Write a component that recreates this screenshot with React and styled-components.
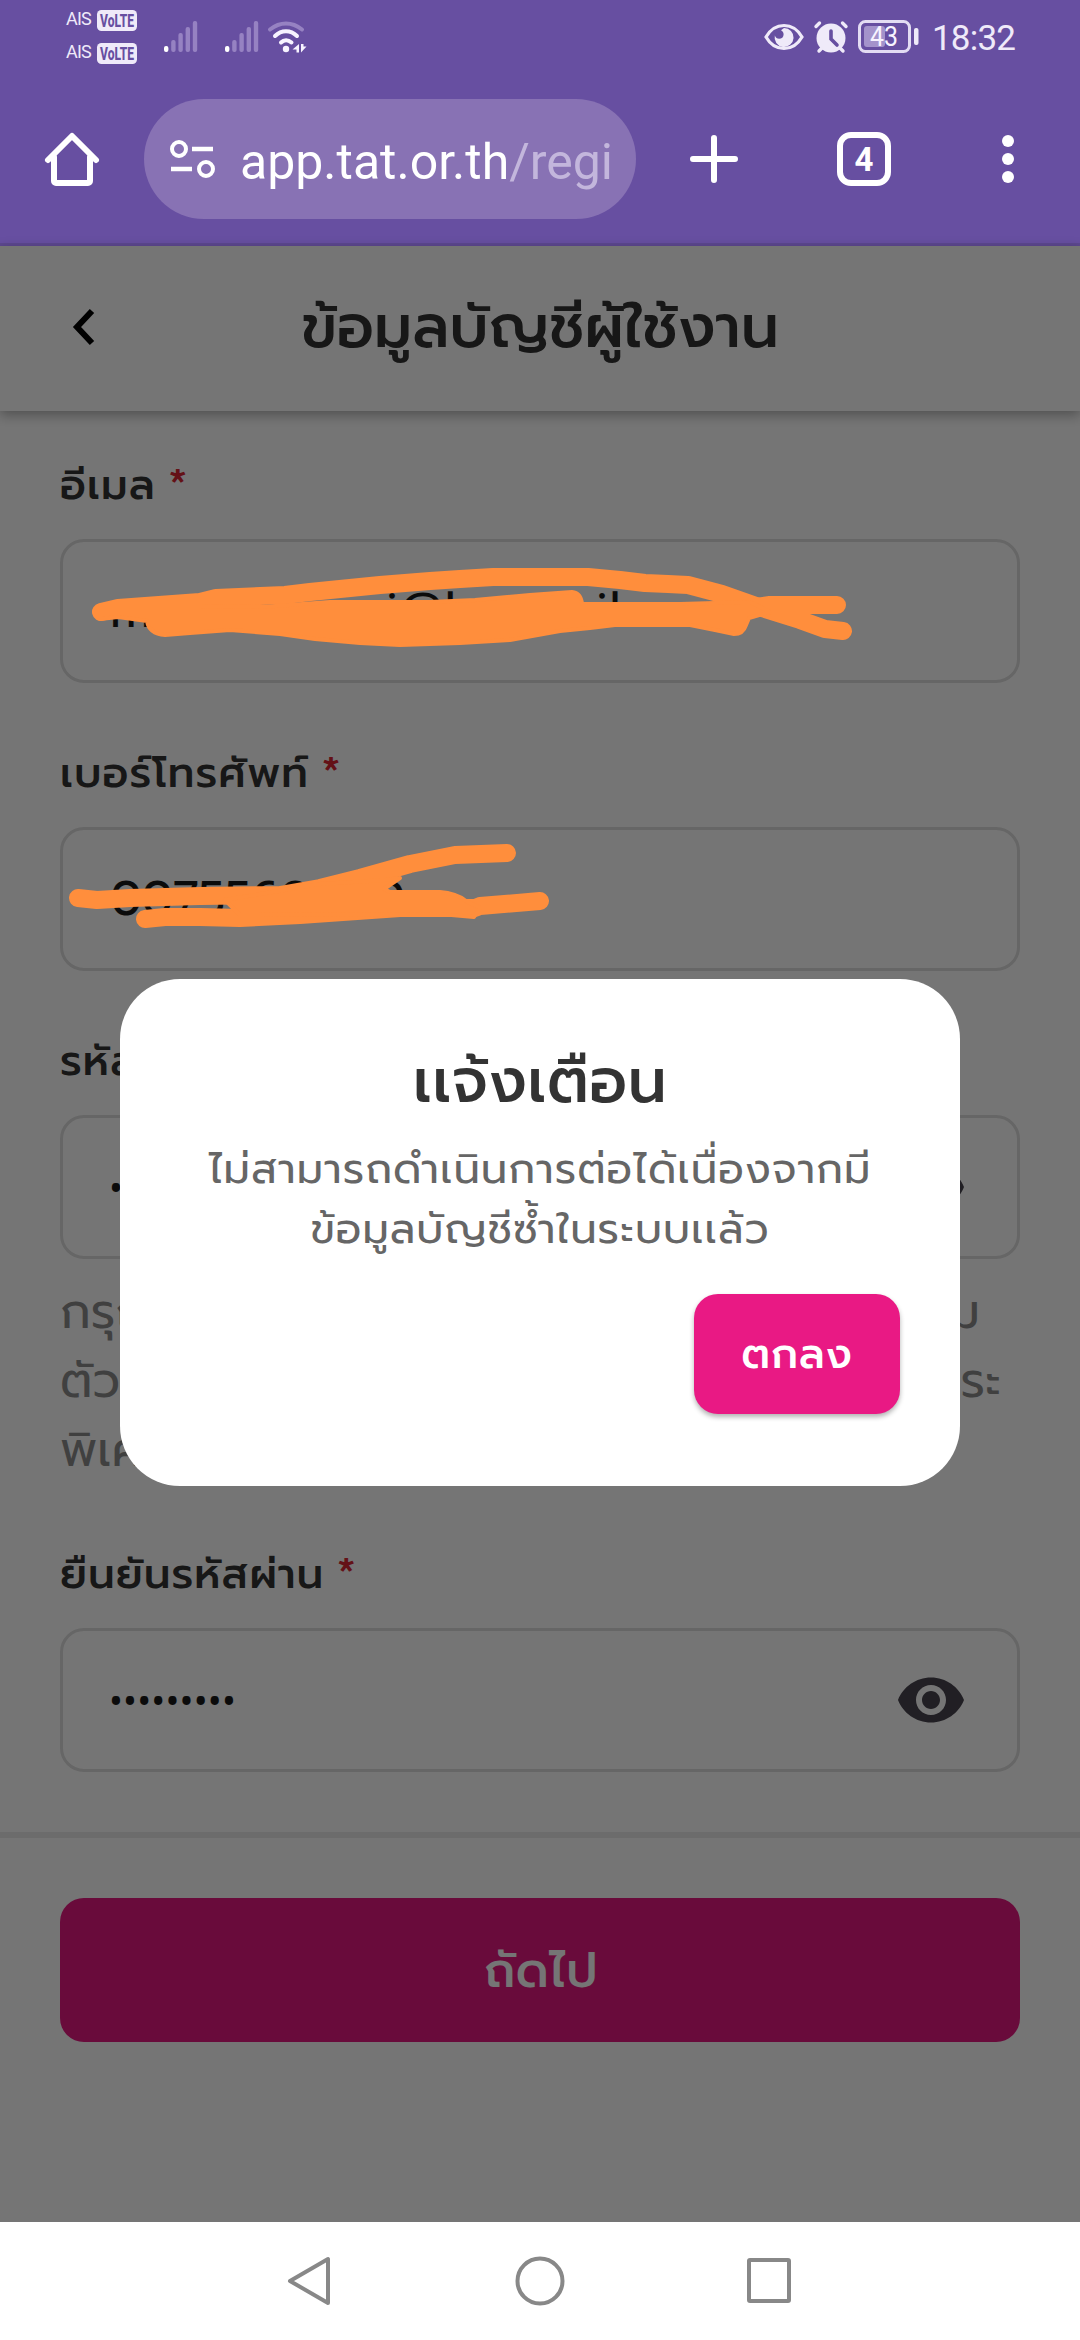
import React from "react";
import styled, { createGlobalStyle } from "styled-components";

const GlobalStyle = createGlobalStyle`
  * {
    box-sizing: border-box;
  }
  body {
    margin: 0;
    font-family: "Prompt", "Noto Sans Thai", "Noto Sans", sans-serif;
  }
  svg {
    display: block;
    flex: none;
    overflow: visible;
  }
`;

const Screen = styled.div`
  width: 1080px;
  height: 2340px;
  display: flex;
  flex-direction: column;
  background: #fff;
  overflow: hidden;
`;

/* ---------- phone status bar + browser bar ---------- */

const BrowserChrome = styled.header`
  flex: none;
  height: 246px;
  background: #674fa1;
  border-bottom: 3px solid #5d4890;
  font-family: Roboto, "Noto Sans", sans-serif;
`;

const StatusBar = styled.div`
  height: 74px;
  padding: 0 66px;
  display: flex;
  align-items: center;
  color: #efeaf9;
`;

const SimList = styled.div`
  display: flex;
  flex-direction: column;
`;

const Sim = styled.div`
  height: 33px;
  display: flex;
  align-items: center;
  gap: 6px;
  font-size: 18px;
  letter-spacing: -0.8px;
`;

const Carrier = styled.span`
  width: 25px;
  line-height: 20px;
  padding-bottom: 3px;
`;

const Signals = styled.div`
  display: flex;
  margin: 0 9px 0 27px;
  gap: 27px;
`;

const StatusRight = styled.div`
  margin-left: auto;
  display: flex;
  align-items: center;
`;

const StatusIcons = styled.div`
  display: flex;
  align-items: center;
  gap: 10px;
`;

const Clock = styled.span`
  margin-left: 12px;
  width: 82px;
  font-size: 35px;
  line-height: 40px;
  padding-top: 4px;
  white-space: nowrap;
  letter-spacing: -0.8px;
`;

const Toolbar = styled.div`
  height: 120px;
  margin-top: 25px;
  padding-left: 45px;
  display: flex;
  align-items: center;
`;

const AddressPill = styled.div`
  width: 492px;
  height: 120px;
  margin: 0 54px 0 45px;
  padding-left: 26px;
  border-radius: 60px;
  background: #8872b4;
  display: flex;
  align-items: center;
  gap: 24px;
`;

const Url = styled.span`
  padding-top: 5px;
  color: #fff;
  font-size: 50px;
  line-height: 60px;
  white-space: nowrap;
`;

const UrlPath = styled.span`
  color: #c3b6dc;
`;

const TabCount = styled.div`
  width: 54px;
  height: 54px;
  margin: 0 111px 0 99px;
  border: 6px solid #fff;
  border-radius: 14px;
  color: #fff;
  font-size: 33px;
  font-weight: 700;
  line-height: 43px;
  text-align: center;
`;

/* ---------- page ---------- */

const Page = styled.main`
  position: relative;
  flex: none;
  height: 1976px;
  background: #fff;
`;

const PageHeader = styled.div`
  height: 165px;
  padding: 0 0 3px 72px;
  display: grid;
  grid-template-columns: 100px 736px;
  align-items: center;
  box-shadow: 0 4px 12px rgba(0, 0, 0, 0.32);
`;

const PageTitle = styled.h1`
  margin: 0;
  color: #333;
  font-size: 60px;
  font-weight: 500;
  line-height: 90px;
  text-align: center;
`;

const Form = styled.form`
  padding: 42px 60px 60px;
  border-bottom: 6px solid #ececec;
`;

const Field = styled.div`
  & + & {
    margin-top: 58px;
  }
`;

const Label = styled.div`
  height: 64px;
  margin-bottom: 22px;
  color: #333;
  font-size: 42px;
  font-weight: 500;
  line-height: 64px;
  letter-spacing: 1.05px;
  word-spacing: -3.5px;
`;

const Required = styled.span`
  color: #d92632;
`;

const InputBox = styled.div`
  height: 144px;
  padding: 0 50px 0 47px;
  border: 3px solid #dedede;
  border-radius: 24px;
  display: flex;
  align-items: center;
  color: #1a1a1a;
  font-size: 48px;
  line-height: 72px;
`;

const Piece = styled.span`
  width: ${(p) => p.$width}px;
  white-space: nowrap;
  letter-spacing: 1.5px;
`;

const Digits = styled.span`
  letter-spacing: -0.9px;
`;

const Dots = styled.span`
  flex: 1;
  margin-left: -1px;
  font-family: "Noto Sans", sans-serif;
  font-size: 37px;
  line-height: 60px;
  letter-spacing: 0.2px;
`;

const Helper = styled.div`
  margin: 19px 0 57px;
  color: #8c8c8c;
  font-size: 48px;
  line-height: 69px;
`;

const HelperLine = styled.div`
  width: ${(p) => p.$width}px;
  white-space: nowrap;
  text-align-last: ${(p) => (p.$width ? "justify" : "left")};
`;

const NextButton = styled.button`
  display: block;
  width: 960px;
  height: 144px;
  margin: 60px;
  padding: 2px 0 0 2px;
  border: 0;
  border-radius: 24px;
  background: #e41880;
  color: #fff;
  font-family: inherit;
  font-size: 48px;
  font-weight: 500;
  letter-spacing: 0.6px;
`;

/* ---------- alert ---------- */

const Scrim = styled.div`
  position: absolute;
  inset: 0;
  padding-bottom: 3px;
  background: rgba(0, 0, 0, 0.54);
  display: flex;
  align-items: center;
  justify-content: center;
`;

const Scribbles = styled.svg`
  position: absolute;
  left: 0;
  top: 0;
`;

const Dialog = styled.div`
  position: relative;
  width: 840px;
  height: 507px;
  padding: 58px 60px 0;
  border-radius: 60px;
  background: #fff;
  display: flex;
  flex-direction: column;
`;

const DialogTitle = styled.h2`
  margin: 0 0 12px;
  color: #333;
  font-size: 61px;
  font-weight: 500;
  line-height: 90px;
  letter-spacing: 0.6px;
  text-align: center;
`;

const DialogText = styled.p`
  margin: 0 0 35px;
  color: #666;
  font-size: 42px;
  line-height: 60px;
  letter-spacing: 1px;
  text-align: center;
  white-space: nowrap;
`;

const OkButton = styled.button`
  align-self: flex-end;
  width: 206px;
  height: 120px;
  border: 0;
  border-radius: 24px;
  background: #e91984;
  box-shadow: 0 3px 5px rgba(0, 0, 0, 0.3);
  color: #fff;
  font-family: inherit;
  font-size: 42px;
  font-weight: 500;
  letter-spacing: 0.75px;
`;

const NavBar = styled.nav`
  height: 118px;
  padding: 0 289px 0 287px;
  background: #fff;
  display: flex;
  align-items: center;
  justify-content: space-between;
`;

/* ---------- icons ---------- */

const VolteBadge = () => (
  <svg width="40" height="21" viewBox="0 0 40 21">
    <rect width="40" height="21" rx="4.5" fill="#efeaf9" />
    <text
      x="3"
      y="17"
      textLength="34"
      lengthAdjust="spacingAndGlyphs"
      fontSize="18"
      fontWeight="800"
      letterSpacing="0"
      fill="#674fa1"
    >
      VoLTE
    </text>
  </svg>
);

const SignalIcon = () => (
  <svg width="34" height="32" viewBox="0 0 34 32">
    {[6, 12, 19, 25, 31].map((h, i) => (
      <rect
        key={h}
        x={i * 7.2}
        y={31 - h}
        width="4.4"
        height={h}
        rx="2"
        fill={i ? "#9682c2" : "#fff"}
      />
    ))}
  </svg>
);

const WifiIcon = () => (
  <svg
    width="40"
    height="32"
    viewBox="0 0 40 32"
    fill="none"
    strokeWidth="4"
    strokeLinecap="round"
  >
    <path d="M2 8.5C12 0.5 24 0.5 34 8.5" stroke="#9682c2" />
    <path d="M7 15C13.5 8.5 22.5 8.5 29 15" stroke="#f7f3ff" />
    <path d="M13 21.5C16 18.5 20 18.5 23.5 21.5" stroke="#f7f3ff" />
    <circle cx="18" cy="28" r="3.2" fill="#f7f3ff" />
    <path d="M31 23v8.500h-2.500v-3h-4zM33 23v8.500l5.500-6h-3v-2.500z" fill="#f7f3ff" />
  </svg>
);

const EyeCareIcon = () => (
  <svg width="40" height="28" viewBox="0 0 40 28">
    <path
      d="M2 14C6 7 12 2.5 20 2.5S34 7 38 14C34 21 28 25.5 20 25.5S6 21 2 14z"
      fill="none"
      stroke="#efeaf9"
      strokeWidth="3.2"
    />
    <path
      d="M20 5a9.5 9.5 0 1 1-9.200 7.500c.6 2 2.400 3.300 4.300 3.300 2.500 0 4.500-1.900 4.500-4.400 0-2-1-3.400-2.600-4.200z"
      fill="#efeaf9"
    />
  </svg>
);

const AlarmIcon = () => (
  <svg width="34" height="32" viewBox="0 0 34 32" fill="none" strokeLinecap="round">
    <circle cx="17" cy="17" r="14.5" fill="#efeaf9" />
    <path
      d="M2 5.500l3.500-3.500M32 5.500l-3.500-3.500M5 30l3-3M29 30l-3-3"
      stroke="#efeaf9"
      strokeWidth="3.4"
    />
    <path d="M17 10v8l6 6" stroke="#674fa1" strokeWidth="3.6" />
  </svg>
);

const BatteryIcon = () => (
  <svg width="62" height="34" viewBox="0 0 62 34">
    <rect
      x="1.5"
      y="1.5"
      width="50"
      height="30"
      rx="6"
      fill="none"
      stroke="#e3dcf3"
      strokeWidth="3"
    />
    <rect x="6" y="6" width="21" height="21" rx="3" fill="#a493cb" />
    <rect x="56" y="8" width="4.5" height="17" rx="2" fill="#efeaf9" />
    <text
      x="26"
      y="26"
      fontSize="27"
      textAnchor="middle"
      textLength="28"
      lengthAdjust="spacingAndGlyphs"
      fill="#f7f3ff"
    >
      43
    </text>
  </svg>
);

const HomeIcon = () => (
  <svg
    width="54"
    height="54"
    fill="none"
    stroke="#fff"
    strokeWidth="6"
    strokeLinecap="round"
    strokeLinejoin="round"
  >
    <path d="M3 28L27 4L51 28M9 25V49a2 2 0 0 0 2 2H43a2 2 0 0 0 2-2V25" />
  </svg>
);

const TuneIcon = () => (
  <svg width="46" height="40" fill="none" stroke="#fff" strokeWidth="4">
    <circle cx="9" cy="10" r="7" />
    <path d="M22 10h21M1 30h21" strokeWidth="4.5" />
    <circle cx="36" cy="30" r="7" />
  </svg>
);

const PlusIcon = () => (
  <svg width="48" height="48" stroke="#fff" strokeWidth="6" strokeLinecap="round">
    <path d="M24 3v42M3 24h42" />
  </svg>
);

const MoreIcon = () => (
  <svg width="12" height="48" fill="#fff">
    <circle cx="6" cy="6" r="6" />
    <circle cx="6" cy="24" r="6" />
    <circle cx="6" cy="42" r="6" />
  </svg>
);

const BackIcon = () => (
  <svg width="24" height="38" fill="none" stroke="#000" strokeWidth="6">
    <path d="M20 3L5 19L20 35" />
  </svg>
);

const EyeIcon = () => (
  <svg width="72" height="72" viewBox="0 0 24 24" fill="#49454f">
    <path d="M12 4.500C7 4.500 2.730 7.610 1 12c1.730 4.390 6 7.500 11 7.500s9.270-3.110 11-7.500c-1.730-4.390-6-7.500-11-7.500zM12 17c-2.760 0-5-2.240-5-5s2.240-5 5-5 5 2.240 5 5-2.240 5-5 5zm0-8c-1.660 0-3 1.340-3 3s1.340 3 3 3 3-1.340 3-3-1.340-3-3-3z" />
  </svg>
);

const MarkerLines = () => (
  <Scribbles
    width="1080"
    height="760"
    viewBox="0 246 1080 760"
    fill="none"
    stroke="#ff8e3c"
    strokeWidth="18"
    strokeLinecap="round"
    strokeLinejoin="round"
  >
    {/* e-mail */}
    <path d="M101 612L118 608L200 602L216 598L285 595L310 592L380 585L430 581L460 579L493 577H588L620 580L645 583L668 584L688 585L722 594L762 608L800 620L825 629L843 631" />
    <path d="M837 605H770L735 610L700 612" />
    <path
      strokeWidth="4"
      fill="#ff8e3c"
      d="M100 606L200 606L262 607L330 602H430L475 600L530 595L572 592Q581 593 582 604L620 604H680L715 603L750 602L770 612L749 618L746 625Q743 634 734 634L715 630L690 625H615L590 628L560 631L510 640L460 643L400 645L360 643L315 639L280 634L230 630L190 633L165 635Q149 634 147 621L118 617L100 619Z"
    />
    {/* phone */}
    <path d="M78 898L97 900L130 898L200 896L280 895L320 888L360 878L410 864L455 855L507 853" />
    <path d="M145 919L165 917H200L240 918L300 915L400 908L475 908L480 906L540 901" />
    <path
      strokeWidth="4"
      fill="#ff8e3c"
      d="M225 900L320 884L385 880L400 878L384 889L390 892H440Q456 893 466 901L480 908L474 917L440 914L240 915Z"
    />
  </Scribbles>
);

const App = () => {
  return (
    <Screen>
      <GlobalStyle />
      <BrowserChrome>
        <StatusBar>
          <SimList>
            <Sim>
              <Carrier>AIS</Carrier>
              <VolteBadge />
            </Sim>
            <Sim>
              <Carrier>AIS</Carrier>
              <VolteBadge />
            </Sim>
          </SimList>
          <Signals>
            <SignalIcon />
            <SignalIcon />
          </Signals>
          <WifiIcon />
          <StatusRight>
            <StatusIcons>
              <EyeCareIcon />
              <AlarmIcon />
              <BatteryIcon />
            </StatusIcons>
            <Clock>18:32</Clock>
          </StatusRight>
        </StatusBar>
        <Toolbar>
          <HomeIcon />
          <AddressPill>
            <TuneIcon />
            <Url>
              app.tat.or.th<UrlPath>/regi</UrlPath>
            </Url>
          </AddressPill>
          <PlusIcon />
          <TabCount>4</TabCount>
          <MoreIcon />
        </Toolbar>
      </BrowserChrome>

      <Page>
        <PageHeader>
          <BackIcon />
          <PageTitle>ข้อมูลบัญชีผู้ใช้งาน</PageTitle>
        </PageHeader>
        <Form>
          <Field>
            <Label>
              อีเมล <Required>*</Required>
            </Label>
            <InputBox>
              <Piece $width={276}>m</Piece>
              <Piece $width={210}>i@h</Piece>
              <Piece>il</Piece>
            </InputBox>
          </Field>
          <Field>
            <Label>
              เบอร์โทรศัพท์ <Required>*</Required>
            </Label>
            <InputBox>
              <Digits>0075560000</Digits>
            </InputBox>
          </Field>
          <Field>
            <Label>
              รหัสผ่าน <Required>*</Required>
            </Label>
            <InputBox>
              <Dots>•••••••••</Dots>
              <EyeIcon />
            </InputBox>
          </Field>
          <Helper>
            <HelperLine $width={920}>กรุณากรอกรหัสผ่านอย่างน้อย 8 ตัว ผสม</HelperLine>
            <HelperLine $width={941}>ตัวอักษรภาษาไทย ตัวเลข และอักขระ</HelperLine>
            <HelperLine>พิเศษ</HelperLine>
          </Helper>
          <Field>
            <Label>
              ยืนยันรหัสผ่าน <Required>*</Required>
            </Label>
            <InputBox>
              <Dots>•••••••••</Dots>
              <EyeIcon />
            </InputBox>
          </Field>
        </Form>
        <NextButton>ถัดไป</NextButton>

        <Scrim>
          <MarkerLines />
          <Dialog>
            <DialogTitle>เเจ้งเตือน</DialogTitle>
            <DialogText>
              ไม่สามารถดำเนินการต่อได้เนื่องจากมี
              <br />
              ข้อมูลบัญชีซ้ำในระบบเเล้ว
            </DialogText>
            <OkButton>ตกลง</OkButton>
          </Dialog>
        </Scrim>
      </Page>

      <NavBar>
        <svg width="46" height="50" fill="none" stroke="#888" strokeWidth="4" strokeLinejoin="round">
          <path d="M3 25L41 3V47Z" />
        </svg>
        <svg width="50" height="50" fill="none" stroke="#888" strokeWidth="4">
          <circle cx="25" cy="25" r="22.5" />
        </svg>
        <svg width="44" height="46" fill="none" stroke="#888" strokeWidth="4">
          <rect x="2" y="2" width="40" height="41" rx="1" />
        </svg>
      </NavBar>
    </Screen>
  );
};

export default App;
